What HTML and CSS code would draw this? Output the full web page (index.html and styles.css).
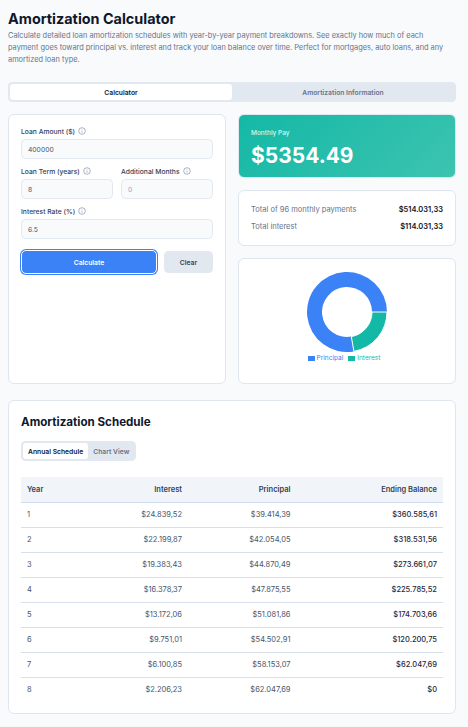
FILE: index.html
```html
<!DOCTYPE html>
<html lang="en">
<head>
<meta charset="utf-8">
<title>Amortization Calculator</title>
<link rel="stylesheet" href="styles.css">
</head>
<body>
<h1 class="title">Amortization Calculator</h1>
<p class="desc">Calculate detailed loan amortization schedules with year-by-year payment breakdowns. See exactly how much of each payment goes toward principal vs. interest and track your loan balance over time. Perfect for mortgages, auto loans, and any amortized loan type.</p>
<div class="tabs">
  <div class="tab active">Calculator</div>
  <div class="tab">Amortization Information</div>
</div>
<div class="columns">
  <section class="card form">
    <div class="field">
      <label class="label">Loan Amount ($) <svg class="info" viewBox="0 0 16 16"><circle cx="8" cy="8" r="6.6"/><path d="M8 7.2v4M8 4.6v1"/></svg></label>
      <div class="input">400000</div>
    </div>
    <div class="pair">
      <div class="field">
        <label class="label">Loan Term (years) <svg class="info" viewBox="0 0 16 16"><circle cx="8" cy="8" r="6.6"/><path d="M8 7.2v4M8 4.6v1"/></svg></label>
        <div class="input">8</div>
      </div>
      <div class="field">
        <label class="label">Additional Months <svg class="info" viewBox="0 0 16 16"><circle cx="8" cy="8" r="6.6"/><path d="M8 7.2v4M8 4.6v1"/></svg></label>
        <div class="input placeholder">0</div>
      </div>
    </div>
    <div class="field">
      <label class="label">Interest Rate (%) <svg class="info" viewBox="0 0 16 16"><circle cx="8" cy="8" r="6.6"/><path d="M8 7.2v4M8 4.6v1"/></svg></label>
      <div class="input">6.5</div>
    </div>
    <div class="actions">
      <button class="btn primary">Calculate</button>
      <button class="btn secondary">Clear</button>
    </div>
  </section>
  <div class="results">
    <section class="pay">
      <div class="pay-label">Monthly Pay</div>
      <div class="pay-value">$5354.49</div>
    </section>
    <section class="card totals">
      <div class="total-row"><span>Total of 96 monthly payments</span><strong>$514.031,33</strong></div>
      <div class="total-row"><span>Total interest</span><strong>$114.031,33</strong></div>
    </section>
    <section class="card chart">
      <svg class="donut" viewBox="0 0 82 82">
        <path class="slice-p" d="M81 41 A40 40 0 1 0 47.9 80.4 L45.3 65.6 A25 25 0 1 1 66 41 Z"/>
        <path class="slice-i" d="M81 41 A40 40 0 0 1 47.9 80.4 L45.3 65.6 A25 25 0 0 0 66 41 Z"/>
      </svg>
      <div class="legend">
        <span class="key key-p"><i></i>Principal</span>
        <span class="key key-i"><i></i>Interest</span>
      </div>
    </section>
  </div>
</div>
<section class="card schedule">
  <h2 class="sub">Amortization Schedule</h2>
  <div class="subtabs">
    <div class="subtab active">Annual Schedule</div>
    <div class="subtab">Chart View</div>
  </div>
  <table class="table">
    <colgroup><col class="c1"><col class="c2"><col class="c3"><col class="c4"></colgroup>
    <thead><tr><th>Year</th><th>Interest</th><th>Principal</th><th>Ending Balance</th></tr></thead>
    <tbody>
      <tr><td>1</td><td>$24.839,52</td><td>$39.414,39</td><td>$360.585,61</td></tr>
      <tr><td>2</td><td>$22.199,87</td><td>$42.054,05</td><td>$318.531,56</td></tr>
      <tr><td>3</td><td>$19.383,43</td><td>$44.870,49</td><td>$273.661,07</td></tr>
      <tr><td>4</td><td>$16.378,37</td><td>$47.875,55</td><td>$225.785,52</td></tr>
      <tr><td>5</td><td>$13.172,06</td><td>$51.081,86</td><td>$174.703,66</td></tr>
      <tr><td>6</td><td>$9.751,01</td><td>$54.502,91</td><td>$120.200,75</td></tr>
      <tr><td>7</td><td>$6.100,85</td><td>$58.153,07</td><td>$62.047,69</td></tr>
      <tr><td>8</td><td>$2.206,23</td><td>$62.047,69</td><td>$0</td></tr>
    </tbody>
  </table>
</section>
</body>
</html>
```
FILE: styles.css
```css
* { box-sizing: border-box; }
html, body { margin: 0; }
body {
  padding: 8px 12px 14px 8px;
  background: #f8fafc;
  font-family: Inter, "Noto Sans", sans-serif;
  color: #0f172a;
  height: 727px;
  overflow: hidden;
}
.title { margin: 0; padding-top: 1px; font-size: 14.4px; line-height: 19px; font-weight: 700; }
.desc { margin: 2px 0 0; max-width: 440px; font-size: 7.4px; line-height: 12px; color: #64748b; }
.tabs {
  display: flex;
  margin-top: 16px;
  height: 20px;
  padding: 2px;
  background: #e2e8f0;
  border-radius: 4.5px;
}
.tab {
  flex: 1;
  display: flex;
  align-items: center;
  justify-content: center;
  font-size: 6.75px;
  font-weight: 600;
  color: #64748b;
  border-radius: 3px;
}
.tab.active { background: #fff; color: #0f172a; }
.columns { display: flex; gap: 12px; margin-top: 12px; }
.card { background: #fff; border: 1px solid #dfe6f0; border-radius: 6px; }
.form { width: 218px; height: 270px; padding: 11px 12px; }
.field { display: flex; flex-direction: column; flex: 1; min-width: 0; }
.label {
  display: flex;
  align-items: center;
  gap: 3px;
  height: 10px;
  margin-bottom: 3px;
  font-size: 6.75px;
  font-weight: 500;
  color: #334155;
}
.info { width: 8px; height: 8px; fill: none; stroke: #64748b; stroke-width: 1.1; }
.input {
  height: 20px;
  padding: 0 6px;
  display: flex;
  align-items: center;
  font-size: 6.75px;
  color: #475569;
  background: #f8fafc;
  border: 1px solid #e2e8f0;
  border-radius: 4.5px;
}
.placeholder { color: #94a3b8; }
.pair { display: flex; gap: 8px; margin-top: 7px; }
.pair + .field { margin-top: 7px; }
.actions { display: flex; gap: 7px; margin-top: 11px; align-items: center; }
.btn {
  border: 0;
  padding: 0;
  font: 600 6.75px Inter, "Noto Sans", sans-serif;
  border-radius: 4.5px;
}
.primary {
  width: 136px;
  height: 24px;
  color: #fff;
  background: #3b82f6;
  border: 1px solid #fff;
  box-shadow: 0 0 0 1px #3b82f6;
  border-radius: 5px;
}
.secondary { flex: 1; height: 22px; background: #e2e8f0; color: #334155; }
.results { width: 218px; display: flex; flex-direction: column; gap: 12px; }
.pay {
  height: 64px;
  padding: 13px 12px 0;
  border-radius: 6px;
  border: 1px solid #e2e8f0;
  background: linear-gradient(135deg, #14b8a6, #3cc4b0);
  color: #fff;
}
.pay-label { font-size: 6.5px; line-height: 10px; font-weight: 500; color: #ccfbf1; }
.pay-value { margin-top: 4px; font-size: 21px; line-height: 27px; font-weight: 700; }
.totals { height: 56px; padding: 13px 12px; display: flex; flex-direction: column; gap: 7px; }
.total-row {
  display: flex;
  justify-content: space-between;
  align-items: center;
  height: 11px;
  font-size: 7.5px;
  color: #64748b;
}
.total-row strong { font-weight: 600; color: #0f172a; }
.chart {
  height: 126px;
  padding-top: 12px;
  display: flex;
  flex-direction: column;
  align-items: center;
}
.donut { width: 82px; height: 82px; display: block; }
.slice-p { fill: #3b82f6; }
.slice-i { fill: #14b8a6; stroke: #fff; stroke-width: 1; }
.legend { display: flex; gap: 5px; height: 10px; align-items: center; font-size: 6.5px; margin-right: 6px; }
.key { display: flex; align-items: center; gap: 2px; }
.key i { display: block; width: 7px; height: 5px; }
.key-p { color: #3b82f6; }
.key-p i { background: #3b82f6; }
.key-i { color: #14b8a6; }
.key-i i { background: #14b8a6; }
.schedule { margin-top: 16px; height: 314px; padding: 12px; }
.sub { margin: 0; font-size: 11.6px; line-height: 18px; font-weight: 700; }
.subtabs {
  display: inline-flex;
  margin-top: 10px;
  padding: 2px;
  height: 20px;
  background: #e2e8f0;
  border-radius: 4.5px;
}
.subtab {
  display: flex;
  align-items: center;
  padding: 0 5px;
  font-size: 6.75px;
  font-weight: 600;
  color: #64748b;
  border-radius: 3px;
}
.subtab.active { background: #fff; color: #0f172a; }
.table { width: 100%; margin-top: 16px; border-collapse: collapse; table-layout: fixed; font-size: 7.5px; }
.c1 { width: 67px; }
.c2 { width: 100px; }
.c3 { width: 108.5px; }
.table th, .table td { padding: 0 6px; text-align: right; }
.table th:first-child, .table td:first-child { text-align: left; }
.table th { height: 25px; background: #f1f5f9; font-weight: 600; color: #334155; border-bottom: 1px solid #cfdcef; }
.table td { height: 25px; color: #475569; border-bottom: 1px solid #d8e0ec; }
.table tr:last-child td { border-bottom: 0; }
.table td:last-child { font-weight: 500; color: #1e293b; }
```
